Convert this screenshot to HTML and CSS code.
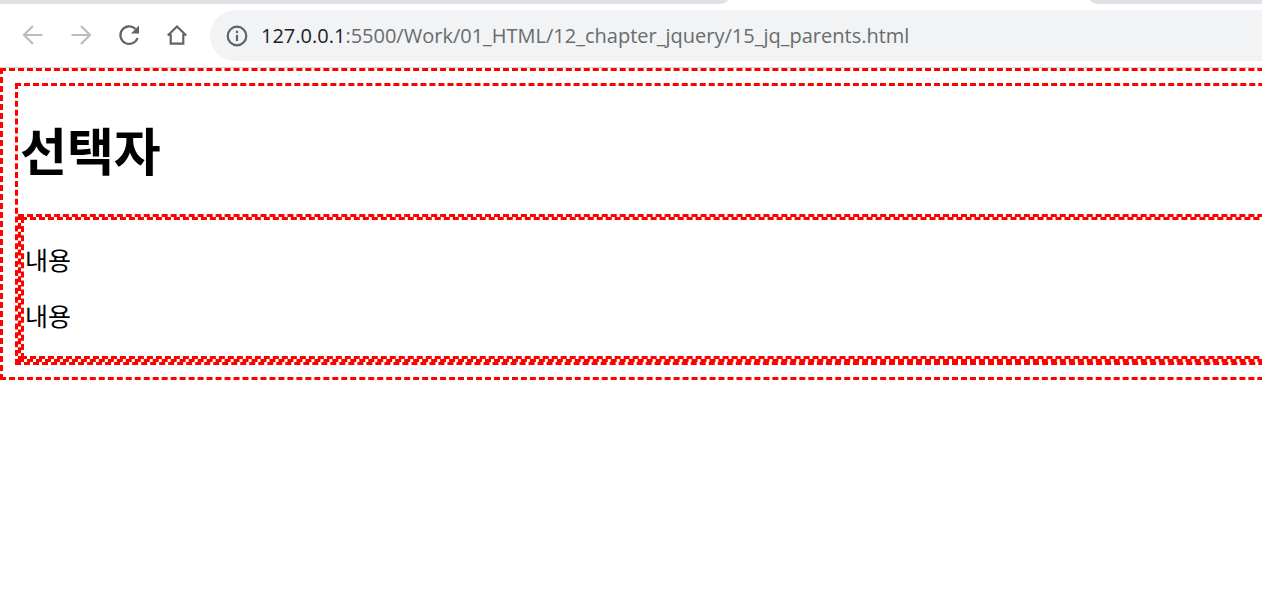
FILE: index.html
```
<!DOCTYPE html>
<html lang="ko">
<head>
    <meta charset="UTF-8">
    <meta name="viewport" content="width=device-width, initial-scale=1.0">
    <title>15_jq_parents</title>
    <link rel="stylesheet" href="styles.css">
</head>
<body>

    <!-- 탭 영역 -->
    <div class="tab-strip">
        <div class="strip-left"></div>
        <div class="strip-right"></div>
    </div>

    <!-- 툴바 -->
    <header class="toolbar">
        <button class="nav-btn disabled" type="button" aria-label="뒤로">
            <svg viewBox="0 0 24 24"><path d="M21.500 11H3.500M12 2L3 11L12 20"/></svg>
        </button>
        <button class="nav-btn disabled" type="button" aria-label="앞으로">
            <svg viewBox="0 0 24 24"><path d="M2.500 11H20.500M12 2L21 11L12 20"/></svg>
        </button>
        <button class="nav-btn" type="button" aria-label="새로고침">
            <svg viewBox="0 0 24 24"><path d="M20.500 14A8.800 8.800 0 1 1 18.500 5"/><path class="fill" d="M22 1.500V9.500H14Z"/></svg>
        </button>
        <button class="nav-btn" type="button" aria-label="홈">
            <svg viewBox="0 0 24 24"><path d="M5.700 10V19.700H18.300V10M2.800 11.500L12 2.500L21.200 11.500"/></svg>
        </button>
        <div class="address-bar">
            <svg class="info-icon" viewBox="0 0 24 24"><circle cx="12" cy="12" r="9.300"/><path d="M12 11V17M12 6.800V9.200"/></svg>
            <a class="url" href="#"><span class="host">127.0.0.1</span>:5500/Work/01_HTML/12_chapter_jquery/15_jq_parents.html</a>
        </div>
    </header>

    <!-- 페이지 -->
    <main class="viewport">
        <div class="page">
            <div class="content">
                <h1>선택자</h1>
                <div class="box">
                    <div class="box">
                        <p>내용</p>
                        <p>내용</p>
                    </div>
                </div>
            </div>
        </div>
    </main>

</body>
</html>
```

FILE: styles.css
```
body {
    margin: 0;
    background-color: white;
    font-family: "Noto Sans CJK KR", sans-serif;
}

/* 탭 영역 */
.tab-strip {
    display: flex;
    justify-content: space-between;
    height: 4px;
}

.strip-left {
    width: 728px;
    background-color: #dee1e6;
    border-bottom-right-radius: 10px 4px;
}

.strip-right {
    width: 172px;
    background-color: #dee1e6;
    border-bottom-left-radius: 10px 4px;
}

/* 툴바 */
.toolbar {
    display: flex;
    align-items: center;
    height: 63px;
    padding-left: 9px;
    border-bottom: 1px solid #d5dbe3;
}

.nav-btn {
    display: flex;
    align-items: center;
    justify-content: center;
    width: 48px;
    height: 48px;
    padding: 0;
    border: none;
    background: none;
    color: #5f6368;
}

.disabled {
    color: #babcbe;
}

svg {
    width: 24px;
    height: 24px;
    fill: none;
    stroke: currentColor;
    stroke-width: 2.2;
}

svg .fill {
    fill: currentColor;
    stroke: none;
}

.address-bar {
    display: flex;
    flex: 1;
    align-items: center;
    gap: 12px;
    height: 51px;
    margin-left: 9px;
    padding-left: 15px;
    background-color: #f1f3f4;
    border-radius: 26px 0 0 26px;
    color: #5f6368;
}

.url {
    font-family: "Open Sans", sans-serif;
    font-size: 20px;
    line-height: 32px;
    color: #696b6e;
    text-decoration: none;
    white-space: nowrap;
}

.host {
    color: #202124;
}

.viewport {
    overflow: hidden;
}

/* 부모 요소 테두리 */
.page,
.content,
.box {
    border: 3px dashed red;
}

/* 창보다 넓은 페이지 */
.page {
    box-sizing: border-box;
    width: calc(100% + 657px);
    padding: 12px;
}

h1 {
    margin: 32px 0 34px;
    padding-left: 2px;
    font-size: 51px;
    line-height: 62px;
}

p {
    margin: 24px 0 26px;
    padding-left: 1px;
    font-size: 25px;
    line-height: 30px;
}
```
